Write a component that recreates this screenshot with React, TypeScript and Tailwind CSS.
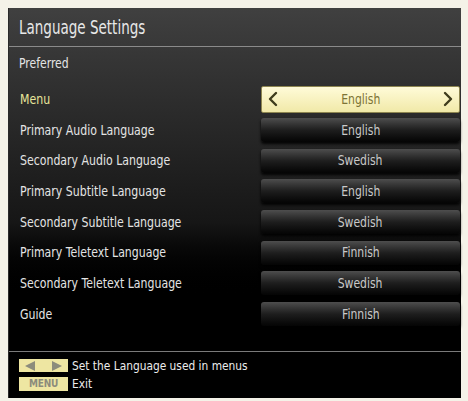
const rows: { label: string; value: string }[] = [
  { label: "Menu", value: "English" },
  { label: "Primary Audio Language", value: "English" },
  { label: "Secondary Audio Language", value: "Swedish" },
  { label: "Primary Subtitle Language", value: "English" },
  { label: "Secondary Subtitle Language", value: "Swedish" },
  { label: "Primary Teletext Language", value: "Finnish" },
  { label: "Secondary Teletext Language", value: "Swedish" },
  { label: "Guide", value: "Finnish" },
];

function Chevron({ dir }: { dir: "left" | "right" }) {
  return (
    <svg width={10} height={16} viewBox="0 0 10 16" fill="none" stroke="#3f3c1c" strokeWidth={2.4} strokeLinecap="round" strokeLinejoin="round">
      {dir === "left" ? <path d="M8 2 2 8l6 6" /> : <path d="M2 2l6 6-6 6" />}
    </svg>
  );
}

function Row({ label, value, active }: { label: string; value: string; active: boolean }) {
  return (
    <div className="flex h-[30.7px] items-center">
      <div className={`w-[252px] pl-[11px] text-[14px] ${active ? "text-[#e6e59a]" : "text-[#e4e4e4]"}`}>
        <span className="inline-block origin-left scale-x-[0.87] whitespace-nowrap">{label}</span>
      </div>
      {active ? (
        <div className="flex h-[27px] w-[199px] items-center justify-between rounded-[2px] border border-[#8d8550] bg-gradient-to-b from-[#fffbd8] to-[#f1e9a8] px-[6px]">
          <Chevron dir="left" />
          <span className="inline-block scale-x-[0.86] text-[14px] text-[#7d7436]">{value}</span>
          <Chevron dir="right" />
        </div>
      ) : (
        <div className="flex h-[24px] w-[199px] items-center justify-center rounded-[3px] bg-gradient-to-b from-[#4e4e4e] via-[#1e1e1e] to-[#050505] shadow-[0_2px_3px_rgba(0,0,0,0.9)]">
          <span className="inline-block scale-x-[0.86] text-[14px] text-[#c9c9c9]">{value}</span>
        </div>
      )}
    </div>
  );
}

export default function App() {
  return (
    <div
      className="h-[401px] w-[468px] bg-[#f4f2e8] pt-[8px] pl-[8px]"
      style={{ fontFamily: '"DejaVu Sans Condensed", "Liberation Sans", sans-serif' }}
    >
      <div className="flex h-[390px] w-[453px] flex-col border-l border-[#2a2a2a] bg-gradient-to-b from-[#404040] via-[#161616] via-55% to-black to-75%">
        {/* Header */}
        <div className="flex h-[39px] items-center border-b border-[#8a8a8a] pl-[10px] text-[19px] text-[#e8e8e8]">
          <span className="inline-block origin-left scale-x-[0.79] whitespace-nowrap">Language Settings</span>
        </div>

        <div className="flex h-[30px] items-center pl-[10px] pt-[2px] text-[14px] text-[#e4e4e4]">
          <span className="inline-block origin-left scale-x-[0.86]">Preferred</span>
        </div>

        <div className="mt-[7px]">
          {rows.map((r, i) => (
            <Row key={r.label} label={r.label} value={r.value} active={i === 0} />
          ))}
        </div>

        {/* Footer */}
        <div className="mt-auto h-[47px] border-t border-[#7a7a7a] pl-[10px] pt-[5px]">
          <div className="flex h-[17px] items-center gap-[4px]">
            <div className="flex h-[13px] w-[49px] items-center justify-between bg-[#eee6a2] px-[6px]">
              <svg width={10} height={10} viewBox="0 0 10 10">
                <path d="M10 0 0 5l10 5z" fill="#8c8c7c" />
              </svg>
              <svg width={10} height={10} viewBox="0 0 10 10">
                <path d="M0 0l10 5-10 5z" fill="#8c8c7c" />
              </svg>
            </div>
            <span className="inline-block origin-left scale-x-[0.91] whitespace-nowrap text-[13px] text-[#ececec]">
              Set the Language used in menus
            </span>
          </div>
          <div className="mt-[1px] flex h-[17px] items-center gap-[4px]">
            <div className="flex h-[14px] w-[49px] items-center justify-center bg-[#eee6a2] text-[10px] font-bold tracking-tight text-[#8c8c7c]">
              MENU
            </div>
            <span className="inline-block origin-left scale-x-[0.91] text-[13px] text-[#ececec]">Exit</span>
          </div>
        </div>
      </div>
    </div>
  );
}
